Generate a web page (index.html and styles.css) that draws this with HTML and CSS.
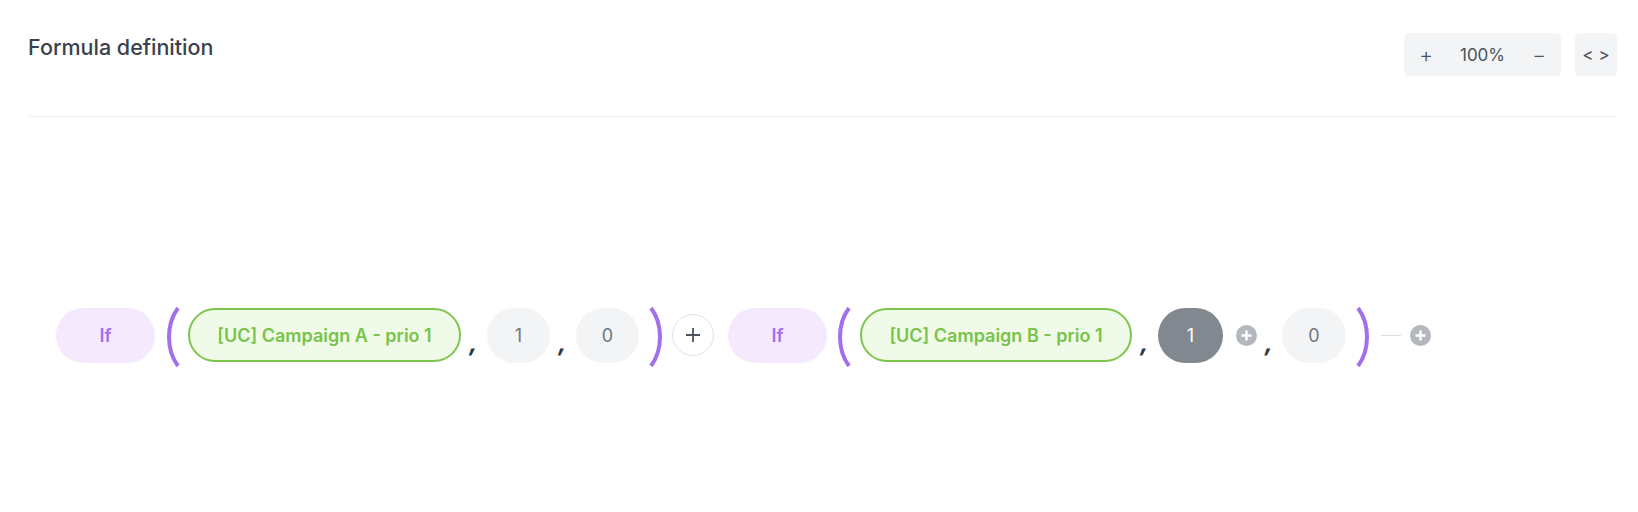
FILE: index.html
```html
<!DOCTYPE html>
<html>
<head>
<meta charset="utf-8">
<link rel="stylesheet" href="styles.css">
</head>
<body>
<div class="page">
  <div class="header">
    <h1 class="title">Formula definition</h1>
    <div class="controls">
      <div class="zoom-group">
        <span class="zbtn">+</span>
        <span class="zval">100%</span>
        <span class="zbtn">−</span>
      </div>
      <div class="code-btn">&lt; &gt;</div>
    </div>
  </div>
  <div class="divider"></div>
  <div class="canvas">
    <div class="formula">
      <div class="pill fn">If</div>
      <svg class="paren open p1" viewBox="0 0 16 60"><path d="M14 1 C2 17 2 43 14 59" fill="none" stroke="#a071ea" stroke-width="4"/></svg>
      <div class="pill metric">[UC] Campaign A - prio 1</div>
      <span class="comma">,</span>
      <div class="pill num">1</div>
      <span class="comma">,</span>
      <div class="pill num">0</div>
      <svg class="paren close c1" viewBox="0 0 16 60"><path d="M2 1 C14 17 14 43 2 59" fill="none" stroke="#a071ea" stroke-width="4"/></svg>
      <div class="op">
        <svg viewBox="0 0 16 16" width="16" height="16"><path d="M8 1v14M1 8h14" stroke="#4b525c" stroke-width="1.8"/></svg>
      </div>
      <div class="pill fn">If</div>
      <svg class="paren open p2" viewBox="0 0 16 60"><path d="M14 1 C2 17 2 43 14 59" fill="none" stroke="#a071ea" stroke-width="4"/></svg>
      <div class="pill metric b">[UC] Campaign B - prio 1</div>
      <span class="comma">,</span>
      <div class="pill num active">1</div>
      <span class="mini-add"><svg viewBox="0 0 21 21" width="21" height="21"><circle cx="10.5" cy="10.5" r="10.5" fill="#b4b8bc"/><path d="M10.5 5.5v10M5.5 10.5h10" stroke="#fff" stroke-width="2.4"/></svg></span>
      <span class="comma tight">,</span>
      <div class="pill num last">0</div>
      <svg class="paren close c2" viewBox="0 0 16 60"><path d="M2 1 C14 17 14 43 2 59" fill="none" stroke="#a071ea" stroke-width="4"/></svg>
      <span class="connector"></span>
      <span class="mini-add end"><svg viewBox="0 0 21 21" width="21" height="21"><circle cx="10.5" cy="10.5" r="10.5" fill="#b4b8bc"/><path d="M10.5 5.5v10M5.5 10.5h10" stroke="#fff" stroke-width="2.4"/></svg></span>
    </div>
  </div>
</div>
</body>
</html>
```
FILE: styles.css
```css
* { box-sizing: border-box; }
html, body { margin: 0; padding: 0; background: #fff; }
body { font-family: Inter, "Noto Sans", "Liberation Sans", sans-serif; color: #3a414d; }
.page { padding: 33px 21px 0 28px; width: 1638px; }
.header { display: flex; justify-content: space-between; align-items: flex-start; height: 83px; }
.title { margin: 0; font-size: 21.5px; font-weight: 500; line-height: 28px; color: #3a414d; }
.controls { display: flex; gap: 14px; }
.zoom-group { display: flex; align-items: center; justify-content: space-between; height: 43px; width: 157px; background: #f3f4f6; border-radius: 5px; padding: 0 15px; font-size: 17px; color: #4a515b; }
.zbtn { width: 14px; text-align: center; font-size: 21px; font-weight: 300; }
.zval { font-size: 17px; }
.code-btn { width: 42px; height: 43px; background: #f3f4f6; border-radius: 5px; display: flex; align-items: center; justify-content: center; font-size: 17px; color: #4a515b; }
.divider { height: 1px; background: #eef0f2; }
.canvas { padding: 186px 0 0 28px; height: 395px; }
.formula { display: flex; align-items: center; }
.pill { height: 55px; border-radius: 28px; display: flex; align-items: center; justify-content: center; font-size: 18px; flex: none; }
.fn { width: 99px; background: #f5eafd; color: #a071ea; font-weight: 600; }
.metric { width: 273px; height: 54px; background: #effbe8; border: 2px solid #7dc64e; color: #78c349; font-weight: 600; }
.metric.b { width: 272px; }
.num { width: 63px; background: #f3f4f6; color: #6f7782; font-weight: 400; }
.num.active { width: 65px; background: #81888f; color: #fff; }
.num.last { width: 64px; }
.paren { width: 16px; height: 60px; margin-top: 4px; flex: none; }
.p1 { margin-left: 9px; margin-right: 8px; }
.c1 { margin-left: 10px; margin-right: 7px; }
.p2 { margin-left: 8px; margin-right: 9px; }
.c2 { margin-left: 10px; margin-right: 9px; }
.comma { flex: none; width: 26px; text-align: center; font-size: 22px; font-weight: 800; line-height: 22px; height: 22px; color: #2f3640; margin-top: 15px; transform: skewX(-12deg); }
.comma.tight { width: 25px; }
.op { flex: none; width: 42px; height: 42px; border-radius: 50%; border: 1px solid #e1e2e4; display: flex; align-items: center; justify-content: center; margin-right: 14px; }
.mini-add { display: flex; margin-left: 13px; flex: none; }
.mini-add.end { margin-left: 9px; }
.connector { width: 20px; height: 1px; background: #dcdde0; flex: none; }
```
